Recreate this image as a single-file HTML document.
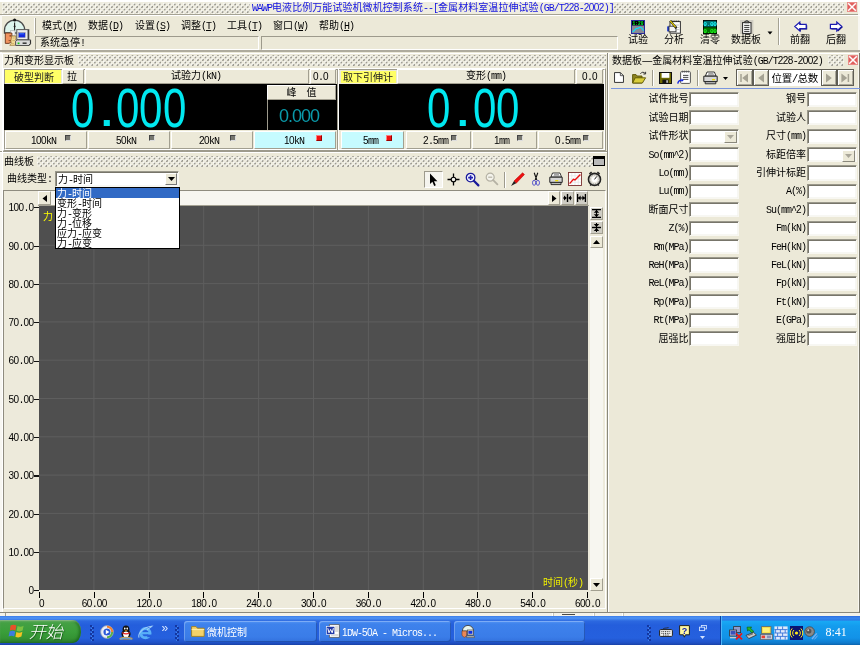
<!DOCTYPE html>
<html lang="zh-CN"><head><meta charset="utf-8"><title>WAWP</title>
<style>
html,body{margin:0;padding:0;}
body{width:860px;height:645px;overflow:hidden;background:#ECE9D8;}
#root{position:relative;width:860px;height:645px;overflow:hidden;background:transparent;
  font-family:"Liberation Sans","Noto Sans CJK SC",sans-serif;font-size:10px;line-height:12px;color:#000;will-change:transform;}
#root div,#root svg{position:absolute;box-sizing:border-box;}
.t{white-space:nowrap;}
.l{font-family:"Liberation Mono","Noto Sans CJK SC",monospace;letter-spacing:-1px;}
.d{font-family:"Liberation Sans",sans-serif;letter-spacing:-0.56px;}
.i{overflow:visible;}
/* dotted gripper pattern used in caption bars */
.dots{background-color:#EEECDF;
  background-image:
   radial-gradient(circle at 0.8px 1.6px,rgba(255,255,255,.95) 0.4px,rgba(255,255,255,0) 1px),
   radial-gradient(circle at 1.6px 2.4px,#74726a 0.5px,rgba(116,114,106,0) 1.05px),
   radial-gradient(circle at 0.8px 1.6px,rgba(255,255,255,.95) 0.4px,rgba(255,255,255,0) 1px),
   radial-gradient(circle at 1.6px 2.4px,#74726a 0.5px,rgba(116,114,106,0) 1.05px);
  background-size:5.04px 5.04px,5.04px 5.04px,5.04px 5.04px,5.04px 5.04px;
  background-position:0 0,0 0,2.52px 2.52px,2.52px 2.52px;}
/* 3D borders */
.raised{border:1px solid;border-color:#fff #a29f90 #a29f90 #fff;background:#ECE9D8;}
.sunken{border:1px solid;border-color:#9d9a8c #fff #fff #9d9a8c;background:#ECE9D8;}
.edit{border:1px solid;border-color:#9a988b #f8f7f1 #f8f7f1 #9a988b;background:#fff;box-shadow:inset 1px 1px 0 #77756a,inset -0.5px -0.5px 0 #f0efe8;}
.hl{background:#C6FBFF;}
.black{background:#000;}
.yel{background:#FFFF66;}

</style></head>
<body>
<div id="root">
<!-- title bar -->
<div class="" style="left:0px;top:0px;width:860px;height:2px;background:#fff;"></div>
<div class="dots" style="left:2px;top:3px;width:842px;height:11px;background-position:0 -1px,0 -1px,2.52px 1.52px,2.52px 1.52px;"></div>
<div class="" style="left:2px;top:2px;width:842px;height:1px;background:#EEECDF;"></div>
<div class="" style="left:0px;top:14px;width:860px;height:1px;background:#a5a293;"></div>
<div class="" style="left:250px;top:2px;width:362px;height:12px;background:#EFEDE0;"></div>
<div class="t" style="left:252px;top:2px;color:#1212E0;letter-spacing:0.065px;"><span class="l">WAWP</span>电液比例万能试验机微机控制系统<span class="l">--[</span>金属材料室温拉伸试验<span class="l">(GB/T</span><span class="d">228</span><span class="l">-</span><span class="d">2002</span><span class="l">)]</span></div>
<div class="" style="left:846.5px;top:2.3px;width:10px;height:10px;background:#E0605E;border:1px solid #E98A86;"></div>
<svg class="i" style="left:846.5px;top:2.3px" width="10" height="10" viewBox="0 0 10 10"><path d="M1.2 1.2 L8.8 8.8 M8.8 1.2 L1.2 8.8" stroke="#fff" stroke-width="1.5" fill="none"/></svg>
<div class="" style="left:858px;top:0px;width:2px;height:52px;background:#F8F7F2;"></div>
<!-- main toolbar -->
<div class="" style="left:0px;top:15px;width:860px;height:1px;background:#fff;"></div>
<div class="" style="left:0px;top:15px;width:2px;height:597px;background:#F8F7F2;"></div>
<div class="" style="left:0px;top:50.3px;width:860px;height:2.2px;background:#aeab9d;"></div>
<div class="" style="left:0px;top:52.5px;width:860px;height:1px;background:#fff;"></div>
<svg class="i" style="left:4px;top:18px" width="28" height="28" viewBox="0 0 28 28">
<path d="M0.5 15 V12.2 A10.1 10.1 0 0 1 20.7 12.2 V15 Z" fill="#DDF5EE" stroke="#4a4a4a" stroke-width="1.3"/>
<circle cx="10.6" cy="2" r="1.5" fill="#111"/>
<path d="M10.6 4.6 V12.6" stroke="#222" stroke-width="1.1"/><path d="M10.6 6.2 L11.5 8.4 L10.6 10.6 L9.7 8.4 Z" fill="#222"/>
<rect x="6.4" y="12.8" width="4.6" height="5" fill="#f4f4f4" stroke="#999" stroke-width="0.5"/>
<path d="M1.3 15 H7.9 V18.4 L8.9 20.4 L7.9 21 V22.6 L6.8 24.2 L5 25.4 H1.3 Z" fill="#F0925E" stroke="#5a2a10" stroke-width="0.8"/>
<path d="M5.6 17.2 h1.2 v1.4 h-1.2 z" fill="#5a2a10"/><path d="M4.6 22.4 Q6 23.2 7.2 22.2" stroke="#5a2a10" stroke-width="0.7" fill="none"/>
<path d="M7.8 18 H11.9 V21 L10.9 22.4 L11.9 23.8 V25.6 L10.6 27.4 H5.8 L7.4 25 L6.8 23 Z" fill="#F2D893" stroke="#8a6a2a" stroke-width="0.6"/>
<path d="M8.6 20 h2 M8.4 22.6 h1.6 M7.6 25.6 h2.4" stroke="#b89a52" stroke-width="0.6"/>
<rect x="12.8" y="11.6" width="12" height="10.3" fill="#ececec" stroke="#555" stroke-width="1"/>
<path d="M24.2 12 V21.6" stroke="#333" stroke-width="1.2"/>
<rect x="14.4" y="14.6" width="6.8" height="5" fill="#1428E0" stroke="#999" stroke-width="0.5"/>
<path d="M15.4 15.8 h4.6" stroke="#4a8aff" stroke-width="0.8"/>
<path d="M11.6 23.4 L13 21.9 H26.6 V25.6 L25.2 27.5 H11.6 Z" fill="#dadada" stroke="#444" stroke-width="0.9"/>
<path d="M25.2 27.2 L26.4 25.6 V22.4" stroke="#222" stroke-width="0.9" fill="none"/>
<rect x="13.6" y="24.5" width="1.9" height="1.7" fill="#14c814"/>
<path d="M18.6 25.2 h4" stroke="#333" stroke-width="1.5"/>
</svg>
<div class="" style="left:34px;top:18px;width:1px;height:16px;background:#fff;"></div>
<div class="" style="left:35px;top:18px;width:1px;height:16px;background:#a5a293;"></div>
<div class="t" style="left:42px;top:20px;">模式<span class="l">(<u>M</u>)</span></div>
<div class="t" style="left:88px;top:20px;">数据<span class="l">(<u>D</u>)</span></div>
<div class="t" style="left:135px;top:20px;">设置<span class="l">(<u>S</u>)</span></div>
<div class="t" style="left:181px;top:20px;">调整<span class="l">(<u>T</u>)</span></div>
<div class="t" style="left:227px;top:20px;">工具<span class="l">(<u>T</u>)</span></div>
<div class="t" style="left:273px;top:20px;">窗口<span class="l">(<u>W</u>)</span></div>
<div class="t" style="left:319px;top:20px;">帮助<span class="l">(<u>H</u>)</span></div>
<div class="sunken" style="left:35px;top:36px;width:224px;height:14px;"></div>
<div class="t" style="left:40px;top:37px;">系统急停<span class="l">!</span></div>
<div class="sunken" style="left:261px;top:36px;width:357px;height:14px;"></div>
<svg class="i" style="left:631px;top:20px" width="14" height="14" viewBox="0 0 14 14">
<rect x="0" y="0" width="14" height="14" fill="#2a2a9a"/>
<rect x="1" y="1" width="12" height="4.6" fill="#000"/>
<rect x="1" y="5.6" width="12" height="7.4" fill="#8a8a94"/>
<text x="7" y="5" font-family="Liberation Mono, monospace" font-size="4.6" font-weight="bold" fill="#00ff30" text-anchor="middle">1:20</text>
<path d="M1.5 12 C4 11 4.5 8 6 8.4 S8.5 6.6 10 7.4 S12 10 12.6 10.6" stroke="#00e5ff" stroke-width="1.1" fill="none"/>
</svg>
<div class="t" style="left:628px;top:34px;">试验</div>
<svg class="i" style="left:667px;top:20px" width="14" height="14" viewBox="0 0 14 14">
<rect x="3" y="1.6" width="10.4" height="11.6" fill="#fff" stroke="#333" stroke-width="1"/>
<path d="M3.6 1.2 H13" stroke="#222" stroke-width="1.6" stroke-dasharray="1 0.9"/>
<path d="M5 5 h7 M9.6 7.4 h2.6 M9.6 9.6 h2.6" stroke="#aaa" stroke-width="0.7"/>
<rect x="0.2" y="6.4" width="1.8" height="5" fill="#1030d0"/>
<rect x="2" y="6.2" width="7" height="5.6" fill="#f4f4f4" stroke="#333" stroke-width="0.9"/>
<path d="M3.2 0.8 L9.4 8.2" stroke="#222" stroke-width="2.2"/>
<path d="M3.2 0.8 L8.6 7.2" stroke="#e8d000" stroke-width="1.2"/>
</svg>
<div class="t" style="left:664px;top:34px;">分析</div>
<svg class="i" style="left:703px;top:20px" width="14" height="14" viewBox="0 0 14 14">
<rect x="0" y="0" width="14" height="14" fill="#000"/>
<rect x="0.8" y="0.8" width="12.4" height="5.9" fill="#007070"/>
<rect x="0.8" y="7.3" width="12.4" height="5.9" fill="#007000"/>
<text x="7" y="6" font-family="Liberation Mono, monospace" font-size="6.2" font-weight="bold" fill="#20ffff" text-anchor="middle" letter-spacing="-0.4">0.00</text>
<text x="7" y="12.6" font-family="Liberation Mono, monospace" font-size="6.2" font-weight="bold" fill="#20ff20" text-anchor="middle" letter-spacing="-0.4">0.00</text>
</svg>
<div class="t" style="left:700px;top:34px;">清零</div>
<svg class="i" style="left:740px;top:20px" width="14" height="14" viewBox="0 0 14 14">
<rect x="0" y="0" width="13.4" height="14" fill="#cfccc2"/>
<rect x="2.6" y="2.6" width="8.4" height="10.8" fill="#fff" stroke="#222" stroke-width="1"/>
<path d="M4.6 2.8 V1.6 H5.8 V0.8 H7.8 V1.6 H9 V2.8 Z" fill="#999" stroke="#222" stroke-width="0.8"/>
<path d="M4.2 5.4 h5.2 M4.2 7.4 h5.2 M4.2 9.4 h5.2 M4.2 11.4 h5.2" stroke="#333" stroke-width="1"/>
</svg>
<div class="t" style="left:731px;top:34px;">数据板</div>
<svg class="i" style="left:767px;top:31px" width="6" height="4" viewBox="0 0 6 4"><path d="M0.5 0.5 h5 l-2.5 3 z" fill="#000"/></svg>
<div class="" style="left:778px;top:18px;width:1px;height:27px;background:#a5a293;"></div>
<div class="" style="left:779px;top:18px;width:1px;height:27px;background:#fff;"></div>
<svg class="i" style="left:794px;top:20.5px" width="14" height="12" viewBox="0 0 14 12"><path d="M1.8 6.3 L6.8 1.8 V4.2 H13.2 V8.4 H6.8 V10.8 Z" fill="#10107a"/><path d="M0.8 5.5 L5.8 1 V3.4 H12.2 V7.6 H5.8 V10 Z" fill="#fff" stroke="#1c1cb0" stroke-width="1.2" stroke-linejoin="miter"/></svg>
<div class="t" style="left:790px;top:34px;">前翻</div>
<svg class="i" style="left:829px;top:20.5px" width="14" height="12" viewBox="0 0 14 12"><path d="M13.8 6.3 L8.8 1.8 V4.2 H2.4 V8.4 H8.8 V10.8 Z" fill="#10107a"/><path d="M12.8 5.5 L7.8 1 V3.4 H1.4 V7.6 H7.8 V10 Z" fill="#fff" stroke="#1c1cb0" stroke-width="1.2" stroke-linejoin="miter"/></svg>
<div class="t" style="left:826px;top:34px;">后翻</div>
<!-- force and deformation panel -->
<div class="dots" style="left:78px;top:55px;width:528px;height:11px;"></div>
<div class="t" style="left:4px;top:55px;">力和变形显示板</div>
<div class="sunken" style="left:3px;top:68px;width:603px;height:83px;border-color:#fff #9d9a8c #9d9a8c #fff;"></div>
<div class="sunken" style="left:4px;top:69px;width:601px;height:81px;border-color:#9d9a8c #fff #fff #9d9a8c;"></div>
<div class="" style="left:337px;top:69px;width:1px;height:81px;background:#9d9a8c;"></div>
<div class="" style="left:338px;top:69px;width:1px;height:81px;background:#fff;"></div>
<div class="yel" style="left:5px;top:70px;width:56px;height:13px;"></div>
<div class="t" style="left:14px;top:72px;color:#222;">破型判断</div>
<div class="raised" style="left:62px;top:69px;width:22px;height:15px;"></div>
<div class="t" style="left:67px;top:71px;">拉</div>
<div class="raised" style="left:85px;top:69px;width:224px;height:15px;"></div>
<div class="t" style="left:171px;top:70px;">试验力<span class="l">(kN)</span></div>
<div class="raised" style="left:310px;top:69px;width:26px;height:15px;"></div>
<div class="t" style="left:313px;top:71px;"><span class="d">0</span><span class="l">.</span><span class="d">0</span></div>
<div class="yel" style="left:341px;top:71px;width:55px;height:12px;"></div>
<div class="t" style="left:343px;top:72px;color:#222;">取下引伸计</div>
<div class="raised" style="left:397px;top:69px;width:178px;height:15px;"></div>
<div class="t" style="left:466px;top:70px;">变形<span class="l">(mm)</span></div>
<div class="raised" style="left:576px;top:69px;width:27px;height:15px;"></div>
<div class="t" style="left:582px;top:71px;"><span class="d">0</span><span class="l">.</span><span class="d">0</span></div>
<div class="black" style="left:4px;top:84px;width:333px;height:46px;"></div>
<div class="black" style="left:339px;top:84px;width:265px;height:46px;"></div>
<div class="t seg" style="left:71px;top:89px;width:20px;height:39px;color:#00E8F0;font-size:55px;line-height:39px;"><span style="display:inline-block;transform:scaleX(0.765);transform-origin:0 50%;">0</span></div>
<div class="t seg" style="left:115.5px;top:89px;width:20px;height:39px;color:#00E8F0;font-size:55px;line-height:39px;"><span style="display:inline-block;transform:scaleX(0.765);transform-origin:0 50%;">0</span></div>
<div class="t seg" style="left:139px;top:89px;width:20px;height:39px;color:#00E8F0;font-size:55px;line-height:39px;"><span style="display:inline-block;transform:scaleX(0.765);transform-origin:0 50%;">0</span></div>
<div class="t seg" style="left:162.5px;top:89px;width:20px;height:39px;color:#00E8F0;font-size:55px;line-height:39px;"><span style="display:inline-block;transform:scaleX(0.765);transform-origin:0 50%;">0</span></div>
<div class="t seg" style="left:97.5px;top:87.5px;width:20px;height:39px;color:#00E8F0;font-size:55px;line-height:39px;"><span style="display:inline-block;transform:scaleX(1.15);transform-origin:0 50%;">.</span></div>
<div class="t seg" style="left:427px;top:89px;width:20px;height:39px;color:#00E8F0;font-size:55px;line-height:39px;"><span style="display:inline-block;transform:scaleX(0.765);transform-origin:0 50%;">0</span></div>
<div class="t seg" style="left:472.5px;top:89px;width:20px;height:39px;color:#00E8F0;font-size:55px;line-height:39px;"><span style="display:inline-block;transform:scaleX(0.765);transform-origin:0 50%;">0</span></div>
<div class="t seg" style="left:495.5px;top:89px;width:20px;height:39px;color:#00E8F0;font-size:55px;line-height:39px;"><span style="display:inline-block;transform:scaleX(0.765);transform-origin:0 50%;">0</span></div>
<div class="t seg" style="left:453.5px;top:87.5px;width:20px;height:39px;color:#00E8F0;font-size:55px;line-height:39px;"><span style="display:inline-block;transform:scaleX(1.15);transform-origin:0 50%;">.</span></div>
<div class="raised" style="left:267px;top:85px;width:69px;height:15px;"></div>
<div class="t" style="left:268px;top:87px;width:67px;text-align:center;word-spacing:7px;">峰 值</div>
<div class="" style="left:267px;top:100px;width:1px;height:30px;background:#9d9a8c;"></div>
<div class="t" style="left:279px;top:105.5px;color:#0A9AAA;font-size:18px;line-height:20px;font-family:'Liberation Sans',sans-serif;letter-spacing:-1px;line-height:20px;">0.000</div>
<div class="raised" style="left:5px;top:131px;width:82px;height:18px;"></div>
<div class="t" style="left:31px;top:135px;"><span class="d">100</span><span class="l">kN</span></div>
<div class="" style="left:65px;top:135px;width:6px;height:6px;background:#77776f;border:1px solid;border-color:#444 #ddd #ddd #444;"></div>
<div class="raised" style="left:88px;top:131px;width:82px;height:18px;"></div>
<div class="t" style="left:116px;top:135px;"><span class="d">50</span><span class="l">kN</span></div>
<div class="" style="left:149px;top:135px;width:6px;height:6px;background:#77776f;border:1px solid;border-color:#444 #ddd #ddd #444;"></div>
<div class="raised" style="left:171px;top:131px;width:82px;height:18px;"></div>
<div class="t" style="left:199px;top:135px;"><span class="d">20</span><span class="l">kN</span></div>
<div class="" style="left:230px;top:135px;width:6px;height:6px;background:#77776f;border:1px solid;border-color:#444 #ddd #ddd #444;"></div>
<div class="raised hl" style="left:254px;top:131px;width:82px;height:18px;"></div>
<div class="t" style="left:284px;top:135px;"><span class="d">10</span><span class="l">kN</span></div>
<div class="" style="left:316px;top:135px;width:6px;height:6px;background:#F01010;border:1px solid;border-color:#ff8080 #900 #900 #ff8080;"></div>
<div class="raised hl" style="left:341px;top:131px;width:63px;height:18px;"></div>
<div class="t" style="left:363px;top:135px;"><span class="d">5</span><span class="l">mm</span></div>
<div class="" style="left:386px;top:135px;width:6px;height:6px;background:#F01010;border:1px solid;border-color:#ff8080 #900 #900 #ff8080;"></div>
<div class="raised" style="left:406px;top:131px;width:65px;height:18px;"></div>
<div class="t" style="left:423px;top:135px;"><span class="d">2</span><span class="l">.</span><span class="d">5</span><span class="l">mm</span></div>
<div class="" style="left:451px;top:135px;width:6px;height:6px;background:#77776f;border:1px solid;border-color:#444 #ddd #ddd #444;"></div>
<div class="raised" style="left:472px;top:131px;width:65px;height:18px;"></div>
<div class="t" style="left:494px;top:135px;"><span class="d">1</span><span class="l">mm</span></div>
<div class="" style="left:517px;top:135px;width:6px;height:6px;background:#77776f;border:1px solid;border-color:#444 #ddd #ddd #444;"></div>
<div class="raised" style="left:538px;top:131px;width:65px;height:18px;"></div>
<div class="t" style="left:555px;top:135px;"><span class="d">0</span><span class="l">.</span><span class="d">5</span><span class="l">mm</span></div>
<div class="" style="left:583px;top:135px;width:6px;height:6px;background:#77776f;border:1px solid;border-color:#444 #ddd #ddd #444;"></div>
<!-- curve panel -->
<div class="" style="left:0px;top:151px;width:608px;height:1px;background:#9d9a8c;"></div>
<div class="" style="left:0px;top:152px;width:608px;height:1px;background:#fff;"></div>
<div class="dots" style="left:37px;top:156px;width:556px;height:11px;"></div>
<div class="t" style="left:4px;top:156px;">曲线板</div>
<div class="" style="left:593px;top:156px;width:12px;height:10px;background:#b9b9b9;border:1px solid #000;border-top:3px solid #000;"></div>
<div class="t" style="left:7px;top:173px;">曲线类型<span class="l">:</span></div>
<div class="edit" style="left:55px;top:171px;width:124px;height:16px;"></div>
<div class="t" style="left:58px;top:174px;">力<span class="l">-</span>时间</div>
<div class="raised" style="left:165px;top:173px;width:12px;height:12px;border-color:#fff #777 #777 #fff;"></div>
<svg class="i" style="left:168px;top:177px" width="7" height="4" viewBox="0 0 7 4"><path d="M0 0 h7 l-3.5 4 z" fill="#000"/></svg>
<div class="" style="left:424px;top:171px;width:19px;height:17px;background:#f5f4ee;border:1px solid;border-color:#9d9a8c #fff #fff #9d9a8c;"></div>
<svg class="i" style="left:429px;top:173px" width="9" height="14" viewBox="0 0 9 14"><path d="M1 0.5 V11 L3.4 8.8 L5.2 13 L6.8 12.3 L5 8.2 H8.4 Z" fill="#000"/></svg>
<svg class="i" style="left:447px;top:173px" width="13" height="13" viewBox="0 0 13 13"><path d="M6.5 0.5 V12.5 M0.5 6.5 H12.5" stroke="#000" stroke-width="1.3"/><circle cx="6.5" cy="6.5" r="2.3" fill="#f4f3ec" stroke="#000" stroke-width="1.1"/></svg>
<svg class="i" style="left:465px;top:172px" width="15" height="15" viewBox="0 0 15 15"><circle cx="5.6" cy="5.6" r="4.3" fill="#f2f4ff" stroke="#1a1a9a" stroke-width="1.3"/>
<path d="M3.2 5.6 H8 M5.6 3.2 V8" stroke="#2020b0" stroke-width="1.6"/>
<path d="M8.8 8.8 L13.4 13.4" stroke="#1a1a9a" stroke-width="2.2" stroke-linecap="round"/></svg>
<svg class="i" style="left:485px;top:172px" width="14" height="14" viewBox="0 0 14 14"><circle cx="5.2" cy="5.2" r="4" fill="#f4f3ec" stroke="#b5b2a4" stroke-width="1.2"/>
<path d="M3.2 5.2 H7.2" stroke="#b5b2a4" stroke-width="1.2"/>
<path d="M8.2 8.2 L12.4 12.4" stroke="#b5b2a4" stroke-width="1.8" stroke-linecap="round"/></svg>
<div class="" style="left:504px;top:172px;width:1px;height:16px;background:#9d9a8c;"></div>
<div class="" style="left:505px;top:172px;width:1px;height:16px;background:#fff;"></div>
<svg class="i" style="left:510px;top:172px" width="15" height="15" viewBox="0 0 15 15"><path d="M12.6 0.8 L14.4 2.6 L6.2 11.2 L4 9 Z" fill="#EE1010" stroke="#b00" stroke-width="0.6"/>
<path d="M4 9 L6.2 11.2 L1 14 Z" fill="#222"/></svg>
<svg class="i" style="left:531px;top:172px" width="10" height="15" viewBox="0 0 10 15"><path d="M3.2 0.8 L5.8 8 M6.8 0.8 L4.2 8" stroke="#111" stroke-width="1.1"/>
<ellipse cx="3.1" cy="10.8" rx="1.6" ry="2.5" fill="none" stroke="#4848c8" stroke-width="0.9"/>
<ellipse cx="6.9" cy="10.8" rx="1.6" ry="2.5" fill="none" stroke="#4848c8" stroke-width="0.9"/></svg>
<svg class="i" style="left:549px;top:172px" width="14" height="14" viewBox="0 0 14 14"><path d="M3.5 1 H11 L12.5 5 H2 Z" fill="#fff" stroke="#222" stroke-width="0.9"/>
<path d="M0.8 5.2 H13.2 V10.4 H0.8 Z" fill="#d6d6d6" stroke="#222" stroke-width="1"/>
<path d="M2 10.4 H12 V12.6 H2 Z" fill="#bbb" stroke="#222" stroke-width="0.9"/>
<rect x="6.2" y="8" width="3" height="1.3" fill="#e8d800"/>
<path d="M5 2.6 h5 M4.6 3.8 h6" stroke="#555" stroke-width="0.6"/></svg>
<svg class="i" style="left:568px;top:172px" width="14" height="14" viewBox="0 0 14 14"><rect x="0.5" y="0.5" width="13" height="13" fill="#fff" stroke="#7a3030" stroke-width="0.9"/>
<path d="M3.8 1 V13 M7 1 V13 M10.2 1 V13 M1 3.8 H13 M1 7 H13 M1 10.2 H13" stroke="#ddd" stroke-width="0.6"/>
<path d="M1.6 11.6 L5.4 7.4 L7 8 L12.4 2.4" stroke="#EE1010" stroke-width="1.4" fill="none"/></svg>
<svg class="i" style="left:587px;top:171px" width="15" height="16" viewBox="0 0 15 16"><path d="M2.4 3 L4.6 1 M12.6 3 L10.4 1" stroke="#222" stroke-width="1.6"/>
<circle cx="7.5" cy="8.4" r="6" fill="#eceae2" stroke="#222" stroke-width="1.6"/>
<circle cx="7.5" cy="8.4" r="4.4" fill="none" stroke="#777" stroke-width="0.9" stroke-dasharray="0.7 1.1"/>
<circle cx="7.5" cy="8.4" r="2.6" fill="#fff"/>
<path d="M7.5 8.4 L9.8 5.4" stroke="#222" stroke-width="1"/>
<path d="M3.2 14.6 L4.4 13.2 M11.8 14.6 L10.6 13.2" stroke="#222" stroke-width="1.3"/></svg>
<div class="" style="left:2px;top:53px;width:1px;height:559px;background:#fff;"></div>
<div class="" style="left:3px;top:190px;width:603px;height:419px;border:1px solid;border-color:#8f8c7f #fff #fff #8f8c7f;background:#EDEADB;"></div>
<div class="" style="left:38px;top:191px;width:510px;height:15px;background:#f7f6f0;"></div>
<div class="raised" style="left:38px;top:191px;width:13px;height:14px;"></div>
<svg class="i" style="left:42px;top:195px" width="5" height="7" viewBox="0 0 5 7"><path d="M5 0 V7 L0.5 3.5 Z" fill="#000"/></svg>
<div class="raised" style="left:548px;top:191px;width:12px;height:14px;"></div>
<svg class="i" style="left:552px;top:195px" width="5" height="7" viewBox="0 0 5 7"><path d="M0 0 V7 L4.5 3.5 Z" fill="#000"/></svg>
<div class="raised" style="left:561px;top:191px;width:13px;height:14px;background:#cfcdc4;"></div>
<svg class="i" style="left:563px;top:194px" width="9" height="8" viewBox="0 0 9 8"><path d="M4.5 0 V8" stroke="#000" stroke-width="1.4"/><path d="M0 4 H3 M9 4 H6" stroke="#000" stroke-width="1"/><path d="M1 1.4 L3.9 4 L1 6.6 Z M8 1.4 L5.1 4 L8 6.6 Z" fill="#000"/></svg>
<div class="raised" style="left:575px;top:191px;width:13px;height:14px;background:#cfcdc4;"></div>
<svg class="i" style="left:577px;top:194px" width="9" height="8" viewBox="0 0 9 8"><path d="M0.6 0 V8 M8.4 0 V8" stroke="#000" stroke-width="1.3"/><path d="M1 4 H8" stroke="#000" stroke-width="1.1"/><path d="M3.6 1.6 L1 4 L3.6 6.4 Z M5.4 1.6 L8 4 L5.4 6.4 Z" fill="#000"/></svg>
<svg class="i" style="left:39px;top:206px" width="549" height="384" viewBox="0 0 549 384"><rect x="0" y="0" width="549" height="384" fill="#4F4F4F"/><g stroke="#5E5E5E" stroke-width="1" fill="none"><path d="M54.9 0 V384" /><path d="M109.8 0 V384" /><path d="M164.7 0 V384" /><path d="M219.6 0 V384" /><path d="M274.5 0 V384" /><path d="M329.4 0 V384" /><path d="M384.3 0 V384" /><path d="M439.2 0 V384" /><path d="M494.1 0 V384" /><path d="M0 39.3 H549" /><path d="M0 77.6 H549" /><path d="M0 115.9 H549" /><path d="M0 154.2 H549" /><path d="M0 192.5 H549" /><path d="M0 230.8 H549" /><path d="M0 269.1 H549" /><path d="M0 307.4 H549" /><path d="M0 345.7 H549" /></g></svg>
<div class="" style="left:38px;top:205px;width:551px;height:1px;background:#a5a293;"></div>
<div class="t" style="left:43px;top:211px;color:#FFFF00;">力</div>
<div class="t" style="left:543px;top:577px;color:#F0F000;">时间<span class="l">(</span>秒<span class="l">)</span></div>
<div class="t" style="left:0px;top:202.2px;width:33.5px;text-align:right;"><span class="d">100</span><span class="l">.</span><span class="d">0</span></div>
<div class="" style="left:33.5px;top:207.3px;width:5.5px;height:1.2px;background:#111;"></div>
<div class="t" style="left:0px;top:240.5px;width:33.5px;text-align:right;"><span class="d">90</span><span class="l">.</span><span class="d">00</span></div>
<div class="" style="left:33.5px;top:245.6px;width:5.5px;height:1.2px;background:#111;"></div>
<div class="t" style="left:0px;top:278.8px;width:33.5px;text-align:right;"><span class="d">80</span><span class="l">.</span><span class="d">00</span></div>
<div class="" style="left:33.5px;top:283.9px;width:5.5px;height:1.2px;background:#111;"></div>
<div class="t" style="left:0px;top:317.1px;width:33.5px;text-align:right;"><span class="d">70</span><span class="l">.</span><span class="d">00</span></div>
<div class="" style="left:33.5px;top:322.2px;width:5.5px;height:1.2px;background:#111;"></div>
<div class="t" style="left:0px;top:355.4px;width:33.5px;text-align:right;"><span class="d">60</span><span class="l">.</span><span class="d">00</span></div>
<div class="" style="left:33.5px;top:360.5px;width:5.5px;height:1.2px;background:#111;"></div>
<div class="t" style="left:0px;top:393.7px;width:33.5px;text-align:right;"><span class="d">50</span><span class="l">.</span><span class="d">00</span></div>
<div class="" style="left:33.5px;top:398.8px;width:5.5px;height:1.2px;background:#111;"></div>
<div class="t" style="left:0px;top:432.0px;width:33.5px;text-align:right;"><span class="d">40</span><span class="l">.</span><span class="d">00</span></div>
<div class="" style="left:33.5px;top:437.1px;width:5.5px;height:1.2px;background:#111;"></div>
<div class="t" style="left:0px;top:470.3px;width:33.5px;text-align:right;"><span class="d">30</span><span class="l">.</span><span class="d">00</span></div>
<div class="" style="left:33.5px;top:475.4px;width:5.5px;height:1.2px;background:#111;"></div>
<div class="t" style="left:0px;top:508.6px;width:33.5px;text-align:right;"><span class="d">20</span><span class="l">.</span><span class="d">00</span></div>
<div class="" style="left:33.5px;top:513.7px;width:5.5px;height:1.2px;background:#111;"></div>
<div class="t" style="left:0px;top:546.9px;width:33.5px;text-align:right;"><span class="d">10</span><span class="l">.</span><span class="d">00</span></div>
<div class="" style="left:33.5px;top:552.0px;width:5.5px;height:1.2px;background:#111;"></div>
<div class="t" style="left:0px;top:585.2px;width:33.5px;text-align:right;"><span class="d">0</span></div>
<div class="" style="left:33.5px;top:590.3px;width:5.5px;height:1.2px;background:#111;"></div>
<div class="" style="left:39.0px;top:592px;width:1px;height:6px;background:#000;"></div>
<div class="t" style="left:39px;top:598px;"><span class="d">0</span></div>
<div class="" style="left:93.8px;top:592px;width:1px;height:6px;background:#000;"></div>
<div class="t" style="left:74.3px;top:598px;width:40px;text-align:center;"><span class="d">60</span><span class="l">.</span><span class="d">00</span></div>
<div class="" style="left:148.6px;top:592px;width:1px;height:6px;background:#000;"></div>
<div class="t" style="left:129.1px;top:598px;width:40px;text-align:center;"><span class="d">120</span><span class="l">.</span><span class="d">0</span></div>
<div class="" style="left:203.4px;top:592px;width:1px;height:6px;background:#000;"></div>
<div class="t" style="left:183.9px;top:598px;width:40px;text-align:center;"><span class="d">180</span><span class="l">.</span><span class="d">0</span></div>
<div class="" style="left:258.2px;top:592px;width:1px;height:6px;background:#000;"></div>
<div class="t" style="left:238.7px;top:598px;width:40px;text-align:center;"><span class="d">240</span><span class="l">.</span><span class="d">0</span></div>
<div class="" style="left:313.0px;top:592px;width:1px;height:6px;background:#000;"></div>
<div class="t" style="left:293.5px;top:598px;width:40px;text-align:center;"><span class="d">300</span><span class="l">.</span><span class="d">0</span></div>
<div class="" style="left:367.8px;top:592px;width:1px;height:6px;background:#000;"></div>
<div class="t" style="left:348.3px;top:598px;width:40px;text-align:center;"><span class="d">360</span><span class="l">.</span><span class="d">0</span></div>
<div class="" style="left:422.6px;top:592px;width:1px;height:6px;background:#000;"></div>
<div class="t" style="left:403.1px;top:598px;width:40px;text-align:center;"><span class="d">420</span><span class="l">.</span><span class="d">0</span></div>
<div class="" style="left:477.4px;top:592px;width:1px;height:6px;background:#000;"></div>
<div class="t" style="left:457.9px;top:598px;width:40px;text-align:center;"><span class="d">480</span><span class="l">.</span><span class="d">0</span></div>
<div class="" style="left:532.2px;top:592px;width:1px;height:6px;background:#000;"></div>
<div class="t" style="left:512.7px;top:598px;width:40px;text-align:center;"><span class="d">540</span><span class="l">.</span><span class="d">0</span></div>
<div class="" style="left:587.0px;top:592px;width:1px;height:6px;background:#000;"></div>
<div class="t" style="left:567.5px;top:598px;width:40px;text-align:center;"><span class="d">600</span><span class="l">.</span><span class="d">0</span></div>
<div class="raised" style="left:590px;top:207px;width:13px;height:13px;background:#cfcdc4;"></div>
<svg class="i" style="left:592px;top:209px" width="9" height="9" viewBox="0 0 9 9"><path d="M0 0.6 H9 M0 8.4 H9" stroke="#000" stroke-width="1.3"/><path d="M4.5 1 V8" stroke="#000" stroke-width="1.1"/><path d="M1.8 3.8 L4.5 1 L7.2 3.8 Z M1.8 5.2 L4.5 8 L7.2 5.2 Z" fill="#000"/></svg>
<div class="raised" style="left:590px;top:221px;width:13px;height:13px;background:#cfcdc4;"></div>
<svg class="i" style="left:592px;top:223px" width="9" height="9" viewBox="0 0 9 9"><path d="M0 4.5 H9" stroke="#000" stroke-width="1.4"/><path d="M4.5 0 V9" stroke="#000" stroke-width="1"/><path d="M1.8 1 L4.5 3.9 L7.2 1 Z M1.8 8 L4.5 5.1 L7.2 8 Z" fill="#000"/></svg>
<div class="raised" style="left:590px;top:236px;width:13px;height:12px;"></div>
<svg class="i" style="left:593px;top:240px" width="7" height="4" viewBox="0 0 7 4"><path d="M0 4 H7 L3.5 0 Z" fill="#000"/></svg>
<div class="" style="left:590px;top:248px;width:13px;height:330px;background:#f7f6f0;"></div>
<div class="raised" style="left:590px;top:578px;width:13px;height:13px;"></div>
<svg class="i" style="left:593px;top:583px" width="7" height="4" viewBox="0 0 7 4"><path d="M0 0 H7 L3.5 4 Z" fill="#000"/></svg>
<div class="" style="left:55px;top:187px;width:125px;height:62px;background:#fff;border:1px solid #000;"></div>
<div class="" style="left:56px;top:188px;width:123px;height:10px;background:#316AC5;"></div>
<div class="t" style="left:57px;top:188.0px;color:#fff;">力<span class="l">-</span>时间</div>
<div class="t" style="left:57px;top:198.0px;color:#000;">变形<span class="l">-</span>时间</div>
<div class="t" style="left:57px;top:208.0px;color:#000;">力<span class="l">-</span>变形</div>
<div class="t" style="left:57px;top:218.0px;color:#000;">力<span class="l">-</span>位移</div>
<div class="t" style="left:57px;top:228.0px;color:#000;">应力<span class="l">-</span>应变</div>
<div class="t" style="left:57px;top:238.0px;color:#000;">力<span class="l">-</span>应变</div>
<div class="" style="left:0px;top:611.5px;width:860px;height:1.5px;background:#8a887c;"></div>
<div class="" style="left:0px;top:613px;width:860px;height:3.5px;background:#F4F2E8;"></div>
<div class="" style="left:5px;top:613px;width:1px;height:3px;background:#9d9a8c;"></div>
<div class="" style="left:552px;top:613px;width:1px;height:3px;background:#fff;"></div>
<div class="" style="left:553px;top:613px;width:1px;height:3px;background:#c9c6b8;"></div>
<div class="" style="left:593px;top:613px;width:1px;height:3px;background:#fff;"></div>
<div class="" style="left:594px;top:613px;width:1px;height:3px;background:#c9c6b8;"></div>
<div class="" style="left:622px;top:613px;width:1px;height:3px;background:#fff;"></div>
<div class="" style="left:623px;top:613px;width:1px;height:3px;background:#c9c6b8;"></div>
<div class="" style="left:562px;top:613.5px;width:13px;height:1.5px;background:#4a4a46;"></div>
<!-- data panel -->
<div class="" style="left:606.5px;top:53px;width:1.5px;height:559px;background:#8a887c;"></div>
<div class="" style="left:608px;top:53px;width:1px;height:559px;background:#fff;"></div>
<div class="dots" style="left:828px;top:55px;width:16px;height:11px;"></div>
<div class="t" style="left:612px;top:55px;letter-spacing:0.05px;">数据板—金属材料室温拉伸试验<span class="l">(GB/T</span><span class="d">228</span><span class="l">-</span><span class="d">2002</span><span class="l">)</span></div>
<div class="" style="left:848px;top:55px;width:10px;height:10px;background:#E0605E;border:1px solid #E98A86;"></div>
<svg class="i" style="left:848px;top:55px" width="10" height="10" viewBox="0 0 10 10"><path d="M1.2 1.2 L8.8 8.8 M8.8 1.2 L1.2 8.8" stroke="#fff" stroke-width="1.5" fill="none"/></svg>
<div class="" style="left:857.8px;top:53px;width:0.8px;height:558px;background:#f8f7f0;"></div>
<div class="" style="left:858.6px;top:53px;width:1.4px;height:560px;background:#77756a;"></div>
<svg class="i" style="left:614px;top:71.5px" width="10" height="11" viewBox="0 0 11 12"><path d="M0.6 0.6 H7 L10.4 4 V11.4 H0.6 Z" fill="#fff" stroke="#222" stroke-width="1"/><path d="M7 0.6 V4 H10.4" fill="none" stroke="#222" stroke-width="0.8"/></svg>
<svg class="i" style="left:632px;top:71px" width="15" height="13" viewBox="0 0 15 13"><path d="M0.6 12 V3.6 H4 L5.2 5 H10 V12 Z" fill="#8f8420" stroke="#5a5200" stroke-width="0.9"/>
<path d="M0.6 12 L3.2 6.8 H13.6 L10.4 12 Z" fill="#d9cd3c" stroke="#5a5200" stroke-width="0.9"/>
<path d="M8.4 2.8 C9.6 0.8 12 0.8 13 2.4" fill="none" stroke="#222" stroke-width="0.9"/><path d="M13.6 0.8 V3 H11.4" fill="none" stroke="#222" stroke-width="0.9"/></svg>
<div class="" style="left:652px;top:70px;width:1px;height:16px;background:#9d9a8c;"></div>
<div class="" style="left:653px;top:70px;width:1px;height:16px;background:#fff;"></div>
<svg class="i" style="left:659px;top:72px" width="13" height="12" viewBox="0 0 13 12"><rect x="0.5" y="0.5" width="12" height="11" fill="#6e6a00" stroke="#111" stroke-width="1"/>
<rect x="2.6" y="1" width="7.8" height="4.8" fill="#fff"/>
<rect x="3.4" y="7.6" width="6.2" height="3.6" fill="#111"/><rect x="7.4" y="8.2" width="1.4" height="2.6" fill="#ddd"/></svg>
<svg class="i" style="left:677px;top:70px" width="15" height="15" viewBox="0 0 15 15"><rect x="3.6" y="1.6" width="9.8" height="11.8" rx="1" fill="#fff" stroke="#555" stroke-width="1"/>
<path d="M5.4 0.6 v2 M7.4 0.6 v2 M9.4 0.6 v2 M11.4 0.6 v2" stroke="#555" stroke-width="0.8"/>
<path d="M6 5.4 h5.4 M6 7.4 h5.4 M6 9.4 h5.4" stroke="#333" stroke-width="0.9"/>
<path d="M0.8 13.6 C1.2 11 3 10 5.4 10.2" fill="none" stroke="#1020e0" stroke-width="1.4"/><path d="M4.6 8.6 L6.6 10.3 L4.6 12 Z" fill="#1020e0"/></svg>
<div class="" style="left:697px;top:70px;width:1px;height:16px;background:#9d9a8c;"></div>
<div class="" style="left:698px;top:70px;width:1px;height:16px;background:#fff;"></div>
<svg class="i" style="left:703px;top:71px" width="15" height="14" viewBox="0 0 15 14"><path d="M4 1 H11.4 L13 5 H2.4 Z" fill="#fff" stroke="#222" stroke-width="0.9"/>
<path d="M0.8 5.2 H14.2 V10.6 H0.8 Z" fill="#d6d6d6" stroke="#222" stroke-width="1"/>
<path d="M2.2 10.6 H12.8 V12.8 H2.2 Z" fill="#bbb" stroke="#222" stroke-width="0.9"/>
<rect x="9" y="8" width="3" height="1.3" fill="#e8d800"/>
<path d="M5.4 2.6 h5 M5 3.8 h6" stroke="#555" stroke-width="0.6"/></svg>
<svg class="i" style="left:723px;top:77px" width="5" height="3" viewBox="0 0 5 3"><path d="M0 0 H5 L2.5 3 Z" fill="#000"/></svg>
<div class="" style="left:736px;top:69px;width:17px;height:17px;background:#ECE9D8;border:1px solid #5f5d54;box-shadow:inset 1px 1px 0 #fff,inset -1px -1px 0 #aaa79a;"></div>
<svg class="i" style="left:739px;top:72.5px" width="10" height="10" viewBox="0 0 10 10"><path d="M2 1 V9" stroke="#a5a293" stroke-width="1.5"/><path d="M9 0.6 V9.4 L3.2 5 Z" fill="#a5a293"/></svg>
<div class="" style="left:753px;top:69px;width:16px;height:17px;background:#ECE9D8;border:1px solid #5f5d54;box-shadow:inset 1px 1px 0 #fff,inset -1px -1px 0 #aaa79a;"></div>
<svg class="i" style="left:756px;top:72.5px" width="10" height="10" viewBox="0 0 10 10"><path d="M8 0.6 V9.4 L2.2 5 Z" fill="#a5a293"/></svg>
<div class="" style="left:769px;top:69px;width:52px;height:17px;background:#fff;border-top:1px solid #5f5d54;border-bottom:1px solid #fff;"></div>
<div class="t" style="left:771.5px;top:72px;font-size:10.5px;line-height:12.5px;letter-spacing:-0.2px;">位置<span class="l">/</span>总数</div>
<div class="" style="left:821px;top:69px;width:16px;height:17px;background:#ECE9D8;border:1px solid #5f5d54;box-shadow:inset 1px 1px 0 #fff,inset -1px -1px 0 #aaa79a;"></div>
<svg class="i" style="left:824px;top:72.5px" width="10" height="10" viewBox="0 0 10 10"><path d="M2 0.6 V9.4 L7.8 5 Z" fill="#a5a293"/></svg>
<div class="" style="left:837px;top:69px;width:17px;height:17px;background:#ECE9D8;border:1px solid #5f5d54;box-shadow:inset 1px 1px 0 #fff,inset -1px -1px 0 #aaa79a;"></div>
<svg class="i" style="left:840px;top:72.5px" width="10" height="10" viewBox="0 0 10 10"><path d="M8.4 1 V9" stroke="#a5a293" stroke-width="1.5"/><path d="M1.4 0.6 V9.4 L7.2 5 Z" fill="#a5a293"/></svg>
<div class="" style="left:611px;top:88px;width:249px;height:1px;background:#7a96df;"></div>
<div class="t" style="left:609px;top:93px;width:79.5px;text-align:right;">试件批号</div>
<div class="edit" style="left:689px;top:91.8px;width:49.5px;height:15.3px;"></div>
<div class="t" style="left:730px;top:93px;width:76px;text-align:right;">钢号</div>
<div class="edit" style="left:806.5px;top:91.8px;width:50px;height:15.3px;"></div>
<div class="t" style="left:609px;top:112px;width:79.5px;text-align:right;">试验日期</div>
<div class="edit" style="left:689px;top:110.2px;width:49.5px;height:15.3px;"></div>
<div class="t" style="left:730px;top:112px;width:76px;text-align:right;">试验人</div>
<div class="edit" style="left:806.5px;top:110.2px;width:50px;height:15.3px;"></div>
<div class="t" style="left:609px;top:130px;width:79.5px;text-align:right;">试件形状</div>
<div class="edit" style="left:689px;top:128.6px;width:49.5px;height:15.3px;"></div>
<div class="t" style="left:730px;top:130px;width:76px;text-align:right;">尺寸<span class="l">(mm)</span></div>
<div class="edit" style="left:806.5px;top:128.6px;width:50px;height:15.3px;"></div>
<div class="raised" style="left:724px;top:131px;width:13px;height:12px;border-color:#fff #8a887c #8a887c #fff;"></div>
<svg class="i" style="left:727px;top:135px" width="7" height="4" viewBox="0 0 7 4"><path d="M0 0 H7 L3.5 4 Z" fill="#aaa79a"/></svg>
<div class="t" style="left:609px;top:149px;width:79.5px;text-align:right;"><span class="l">So(mm^</span><span class="d">2</span><span class="l">)</span></div>
<div class="edit" style="left:689px;top:147.0px;width:49.5px;height:15.3px;"></div>
<div class="t" style="left:730px;top:149px;width:76px;text-align:right;">标距倍率</div>
<div class="edit" style="left:806.5px;top:147.0px;width:50px;height:15.3px;"></div>
<div class="raised" style="left:842px;top:150px;width:13px;height:12px;border-color:#fff #8a887c #8a887c #fff;"></div>
<svg class="i" style="left:845px;top:154px" width="7" height="4" viewBox="0 0 7 4"><path d="M0 0 H7 L3.5 4 Z" fill="#aaa79a"/></svg>
<div class="t" style="left:609px;top:167px;width:79.5px;text-align:right;"><span class="l">Lo(mm)</span></div>
<div class="edit" style="left:689px;top:165.4px;width:49.5px;height:15.3px;"></div>
<div class="t" style="left:730px;top:167px;width:76px;text-align:right;">引伸计标距</div>
<div class="edit" style="left:806.5px;top:165.4px;width:50px;height:15.3px;"></div>
<div class="t" style="left:609px;top:185px;width:79.5px;text-align:right;"><span class="l">Lu(mm)</span></div>
<div class="edit" style="left:689px;top:183.8px;width:49.5px;height:15.3px;"></div>
<div class="t" style="left:730px;top:185px;width:76px;text-align:right;"><span class="l">A(%)</span></div>
<div class="edit" style="left:806.5px;top:183.8px;width:50px;height:15.3px;"></div>
<div class="t" style="left:609px;top:204px;width:79.5px;text-align:right;">断面尺寸</div>
<div class="edit" style="left:689px;top:202.1px;width:49.5px;height:15.3px;"></div>
<div class="t" style="left:730px;top:204px;width:76px;text-align:right;"><span class="l">Su(mm^</span><span class="d">2</span><span class="l">)</span></div>
<div class="edit" style="left:806.5px;top:202.1px;width:50px;height:15.3px;"></div>
<div class="t" style="left:609px;top:222px;width:79.5px;text-align:right;"><span class="l">Z(%)</span></div>
<div class="edit" style="left:689px;top:220.5px;width:49.5px;height:15.3px;"></div>
<div class="t" style="left:730px;top:222px;width:76px;text-align:right;"><span class="l">Fm(kN)</span></div>
<div class="edit" style="left:806.5px;top:220.5px;width:50px;height:15.3px;"></div>
<div class="t" style="left:609px;top:241px;width:79.5px;text-align:right;"><span class="l">Rm(MPa)</span></div>
<div class="edit" style="left:689px;top:238.9px;width:49.5px;height:15.3px;"></div>
<div class="t" style="left:730px;top:241px;width:76px;text-align:right;"><span class="l">FeH(kN)</span></div>
<div class="edit" style="left:806.5px;top:238.9px;width:50px;height:15.3px;"></div>
<div class="t" style="left:609px;top:259px;width:79.5px;text-align:right;"><span class="l">ReH(MPa)</span></div>
<div class="edit" style="left:689px;top:257.3px;width:49.5px;height:15.3px;"></div>
<div class="t" style="left:730px;top:259px;width:76px;text-align:right;"><span class="l">FeL(kN)</span></div>
<div class="edit" style="left:806.5px;top:257.3px;width:50px;height:15.3px;"></div>
<div class="t" style="left:609px;top:277px;width:79.5px;text-align:right;"><span class="l">ReL(MPa)</span></div>
<div class="edit" style="left:689px;top:275.7px;width:49.5px;height:15.3px;"></div>
<div class="t" style="left:730px;top:277px;width:76px;text-align:right;"><span class="l">Fp(kN)</span></div>
<div class="edit" style="left:806.5px;top:275.7px;width:50px;height:15.3px;"></div>
<div class="t" style="left:609px;top:296px;width:79.5px;text-align:right;"><span class="l">Rp(MPa)</span></div>
<div class="edit" style="left:689px;top:294.1px;width:49.5px;height:15.3px;"></div>
<div class="t" style="left:730px;top:296px;width:76px;text-align:right;"><span class="l">Ft(kN)</span></div>
<div class="edit" style="left:806.5px;top:294.1px;width:50px;height:15.3px;"></div>
<div class="t" style="left:609px;top:314px;width:79.5px;text-align:right;"><span class="l">Rt(MPa)</span></div>
<div class="edit" style="left:689px;top:312.5px;width:49.5px;height:15.3px;"></div>
<div class="t" style="left:730px;top:314px;width:76px;text-align:right;"><span class="l">E(GPa)</span></div>
<div class="edit" style="left:806.5px;top:312.5px;width:50px;height:15.3px;"></div>
<div class="t" style="left:609px;top:333px;width:79.5px;text-align:right;">屈强比</div>
<div class="edit" style="left:689px;top:330.9px;width:49.5px;height:15.3px;"></div>
<div class="t" style="left:730px;top:333px;width:76px;text-align:right;">强屈比</div>
<div class="edit" style="left:806.5px;top:330.9px;width:50px;height:15.3px;"></div>
<!-- taskbar -->
<div class="" style="left:0px;top:616px;width:860px;height:29px;background:linear-gradient(to bottom,#3A7BE8 0px,#4F95F5 2px,#2C68E0 5px,#245EDC 9px,#2560DE 22px,#1F50C4 27px,#1941A5 29px);"></div>
<div class="" style="left:0px;top:620px;width:81px;height:23px;border-radius:0 8px 8px 0 / 0 11px 11px 0;background:linear-gradient(to bottom,#6DB869 0px,#44A044 3px,#3A9E3A 12px,#349434 18px,#2A7A2A 23px);box-shadow:inset -2px 0 3px rgba(0,60,0,.45),inset 0 1px 1px rgba(255,255,255,.35);"></div>
<svg class="i" style="left:9px;top:623px" width="17" height="16" viewBox="0 0 17 16">
<path d="M1.6 2.6 C3.4 1.4 5.6 1.4 7.4 2.6 L6.4 7.4 C4.8 6.4 2.8 6.4 0.8 7.4 Z" fill="#E8502A"/>
<path d="M8.6 3 C10.4 4 12.6 4 14.6 2.8 L13.6 7.6 C11.8 8.6 9.6 8.6 7.6 7.8 Z" fill="#7CC142"/>
<path d="M0.6 8.6 C2.4 7.6 4.6 7.6 6.2 8.6 L5.2 13.4 C3.6 12.4 1.4 12.4 -0.4 13.4 Z" fill="#3C7CE0"/>
<path d="M7.4 9 C9.2 10 11.4 10 13.4 8.8 L12.4 13.6 C10.6 14.6 8.4 14.6 6.4 13.8 Z" fill="#F4C222"/></svg>
<div class="t" style="left:30px;top:623.5px;color:#fff;font-size:17px;line-height:19px;font-weight:300;transform:skewX(-14deg);text-shadow:1px 1px 1px rgba(0,40,0,.6);letter-spacing:0px;line-height:18px;">开始</div>
<div class="" style="left:89.5px;top:625px;width:2px;height:2px;background:#1436a0;"></div>
<div class="" style="left:91.5px;top:625.5px;width:1px;height:1px;background:rgba(90,170,250,.55);"></div>
<div class="" style="left:91.5px;top:627px;width:2px;height:2px;background:#1436a0;"></div>
<div class="" style="left:90.5px;top:627.5px;width:1px;height:1px;background:rgba(90,170,250,.55);"></div>
<div class="" style="left:89.5px;top:629px;width:2px;height:2px;background:#1436a0;"></div>
<div class="" style="left:91.5px;top:629.5px;width:1px;height:1px;background:rgba(90,170,250,.55);"></div>
<div class="" style="left:91.5px;top:631px;width:2px;height:2px;background:#1436a0;"></div>
<div class="" style="left:90.5px;top:631.5px;width:1px;height:1px;background:rgba(90,170,250,.55);"></div>
<div class="" style="left:89.5px;top:633px;width:2px;height:2px;background:#1436a0;"></div>
<div class="" style="left:91.5px;top:633.5px;width:1px;height:1px;background:rgba(90,170,250,.55);"></div>
<div class="" style="left:91.5px;top:635px;width:2px;height:2px;background:#1436a0;"></div>
<div class="" style="left:90.5px;top:635.5px;width:1px;height:1px;background:rgba(90,170,250,.55);"></div>
<div class="" style="left:89.5px;top:637px;width:2px;height:2px;background:#1436a0;"></div>
<div class="" style="left:91.5px;top:637.5px;width:1px;height:1px;background:rgba(90,170,250,.55);"></div>
<div class="" style="left:91.5px;top:639px;width:2px;height:2px;background:#1436a0;"></div>
<div class="" style="left:90.5px;top:639.5px;width:1px;height:1px;background:rgba(90,170,250,.55);"></div>
<svg class="i" style="left:99.5px;top:625px" width="14" height="14" viewBox="0 0 14 14"><circle cx="7" cy="7" r="6.4" fill="#e8ecf4" stroke="#8a96b4" stroke-width="0.8"/>
<path d="M7 0.8 A6.2 6.2 0 0 1 13.2 7 L7 7 Z" fill="#F08030"/><path d="M13.2 7 A6.2 6.2 0 0 1 7 13.2 L7 7 Z" fill="#58B048"/>
<circle cx="7" cy="7" r="4.2" fill="#fff"/><circle cx="7" cy="7" r="3.6" fill="#2858D8"/><path d="M5.8 4.8 L9.4 7 L5.8 9.2 Z" fill="#fff"/></svg>
<svg class="i" style="left:119px;top:624.5px" width="14" height="15" viewBox="0 0 14 15"><ellipse cx="7" cy="4.2" rx="3.4" ry="3.8" fill="#111"/><ellipse cx="7" cy="9" rx="4.6" ry="4.2" fill="#111"/>
<ellipse cx="7" cy="9.6" rx="2.8" ry="3" fill="#fff"/><path d="M3 7 Q7 9.4 11 7 L10.6 8.6 Q7 10.6 3.4 8.6 Z" fill="#E82020"/>
<ellipse cx="5.8" cy="3.6" rx="0.8" ry="1.1" fill="#fff"/><ellipse cx="8.2" cy="3.6" rx="0.8" ry="1.1" fill="#fff"/>
<path d="M5.4 5.6 Q7 6.8 8.6 5.6 Q7 5 5.4 5.6 Z" fill="#F0A000"/>
<path d="M0.6 13 Q7 10.6 13.4 13 L13.4 14.6 H0.6 Z" fill="#E8A020"/><path d="M1.2 14.2 Q7 12 12.8 14.2" stroke="#58A0F0" stroke-width="1.2" fill="none"/></svg>
<svg class="i" style="left:137.5px;top:624.5px" width="15" height="15" viewBox="0 0 15 15"><circle cx="7.4" cy="8.2" r="4.6" fill="none" stroke="#58B0F8" stroke-width="3"/>
<path d="M3 8.2 H12" stroke="#58B0F8" stroke-width="2.2"/><path d="M9.2 10.9 H13.4" stroke="#245EDC" stroke-width="2.6"/>
<path d="M1 12.6 C-0.6 8 6 1.6 13.8 1.2 C11 3.4 10 4 9 5" fill="none" stroke="#9CCCF8" stroke-width="1.1"/></svg>
<div class="t" style="left:161.5px;top:620.5px;color:#d8e6ff;font-size:12px;line-height:14px;font-family:'Liberation Sans',sans-serif;">»</div>
<div class="" style="left:175px;top:625px;width:2px;height:2px;background:#1436a0;"></div>
<div class="" style="left:177px;top:625.5px;width:1px;height:1px;background:rgba(90,170,250,.55);"></div>
<div class="" style="left:177px;top:627px;width:2px;height:2px;background:#1436a0;"></div>
<div class="" style="left:176px;top:627.5px;width:1px;height:1px;background:rgba(90,170,250,.55);"></div>
<div class="" style="left:175px;top:629px;width:2px;height:2px;background:#1436a0;"></div>
<div class="" style="left:177px;top:629.5px;width:1px;height:1px;background:rgba(90,170,250,.55);"></div>
<div class="" style="left:177px;top:631px;width:2px;height:2px;background:#1436a0;"></div>
<div class="" style="left:176px;top:631.5px;width:1px;height:1px;background:rgba(90,170,250,.55);"></div>
<div class="" style="left:175px;top:633px;width:2px;height:2px;background:#1436a0;"></div>
<div class="" style="left:177px;top:633.5px;width:1px;height:1px;background:rgba(90,170,250,.55);"></div>
<div class="" style="left:177px;top:635px;width:2px;height:2px;background:#1436a0;"></div>
<div class="" style="left:176px;top:635.5px;width:1px;height:1px;background:rgba(90,170,250,.55);"></div>
<div class="" style="left:175px;top:637px;width:2px;height:2px;background:#1436a0;"></div>
<div class="" style="left:177px;top:637.5px;width:1px;height:1px;background:rgba(90,170,250,.55);"></div>
<div class="" style="left:177px;top:639px;width:2px;height:2px;background:#1436a0;"></div>
<div class="" style="left:176px;top:639.5px;width:1px;height:1px;background:rgba(90,170,250,.55);"></div>
<div class="" style="left:184px;top:621px;width:133px;height:21px;border-radius:3px;background:linear-gradient(to bottom,#5494F4 0px,#3E82EC 3px,#3A7CE8 16px,#3270DC 21px);box-shadow:inset 1px 1px 0 rgba(255,255,255,.25),inset -1px -1px 0 rgba(0,20,90,.35);"></div>
<svg class="i" style="left:191px;top:625px" width="14" height="12" viewBox="0 0 14 12"><path d="M0.6 11.4 V1.6 H5 L6.4 3.2 H13.2 V11.4 Z" fill="#F4D26A" stroke="#a07a12" stroke-width="0.8"/><path d="M0.6 4.6 H13.2" stroke="#fdeea8" stroke-width="1"/></svg>
<div class="t" style="left:207px;top:627px;color:#fff;">微机控制</div>
<div class="" style="left:319px;top:621px;width:132px;height:21px;border-radius:3px;background:linear-gradient(to bottom,#5494F4 0px,#3E82EC 3px,#3A7CE8 16px,#3270DC 21px);box-shadow:inset 1px 1px 0 rgba(255,255,255,.25),inset -1px -1px 0 rgba(0,20,90,.35);"></div>
<svg class="i" style="left:326px;top:624px" width="14" height="14" viewBox="0 0 14 14"><path d="M3.4 0.6 H13.4 V13.4 H3.4 Z" fill="#fff" stroke="#555" stroke-width="0.8"/>
<path d="M9 3 h3.4 M9 5 h3.4 M9 7 h3.4 M5 11 h7.4" stroke="#999" stroke-width="0.7"/>
<rect x="0.4" y="2.4" width="8.4" height="8" fill="#2038A8" stroke="#fff" stroke-width="0.6"/>
<path d="M1.8 4.2 L3 8.8 L4.6 5.4 L6.2 8.8 L7.4 4.2" fill="none" stroke="#fff" stroke-width="1"/></svg>
<div class="t" style="left:342px;top:627px;color:#fff;"><span class="d">1</span><span class="l">DW-</span><span class="d">50</span><span class="l">A - Micros...</span></div>
<div class="" style="left:454px;top:621px;width:131px;height:21px;border-radius:3px;background:linear-gradient(to bottom,#5494F4 0px,#3E82EC 3px,#3A7CE8 16px,#3270DC 21px);box-shadow:inset 1px 1px 0 rgba(255,255,255,.25),inset -1px -1px 0 rgba(0,20,90,.35);"></div>
<svg class="i" style="left:461px;top:624px" width="14" height="14" viewBox="0 0 14 14"><path d="M1.4 7 A5.6 5.6 0 0 1 12.6 7 Z" fill="#E6F4EE" stroke="#444" stroke-width="0.9"/>
<path d="M1 7 h4.6 v5 l-2.4 1.4 l-2.2 -2 z" fill="#E8895A" stroke="#7a3b1c" stroke-width="0.6"/>
<rect x="6.4" y="6" width="6" height="5" fill="#dcdcdc" stroke="#444" stroke-width="0.7"/><rect x="7.4" y="7" width="4" height="2.8" fill="#1030E0"/>
<path d="M5.6 12 h7.8 v1.6 h-7.8 z" fill="#cfcfcf" stroke="#444" stroke-width="0.6"/></svg>
<div class="" style="left:647px;top:625px;width:2px;height:2px;background:#1436a0;"></div>
<div class="" style="left:649px;top:625.5px;width:1px;height:1px;background:rgba(90,170,250,.55);"></div>
<div class="" style="left:649px;top:627px;width:2px;height:2px;background:#1436a0;"></div>
<div class="" style="left:648px;top:627.5px;width:1px;height:1px;background:rgba(90,170,250,.55);"></div>
<div class="" style="left:647px;top:629px;width:2px;height:2px;background:#1436a0;"></div>
<div class="" style="left:649px;top:629.5px;width:1px;height:1px;background:rgba(90,170,250,.55);"></div>
<div class="" style="left:649px;top:631px;width:2px;height:2px;background:#1436a0;"></div>
<div class="" style="left:648px;top:631.5px;width:1px;height:1px;background:rgba(90,170,250,.55);"></div>
<div class="" style="left:647px;top:633px;width:2px;height:2px;background:#1436a0;"></div>
<div class="" style="left:649px;top:633.5px;width:1px;height:1px;background:rgba(90,170,250,.55);"></div>
<div class="" style="left:649px;top:635px;width:2px;height:2px;background:#1436a0;"></div>
<div class="" style="left:648px;top:635.5px;width:1px;height:1px;background:rgba(90,170,250,.55);"></div>
<div class="" style="left:647px;top:637px;width:2px;height:2px;background:#1436a0;"></div>
<div class="" style="left:649px;top:637.5px;width:1px;height:1px;background:rgba(90,170,250,.55);"></div>
<div class="" style="left:649px;top:639px;width:2px;height:2px;background:#1436a0;"></div>
<div class="" style="left:648px;top:639.5px;width:1px;height:1px;background:rgba(90,170,250,.55);"></div>
<svg class="i" style="left:659px;top:627px" width="14" height="10" viewBox="0 0 14 10"><rect x="0.6" y="2.6" width="12.8" height="6.8" rx="1" fill="#f4f4f4" stroke="#222" stroke-width="1"/>
<path d="M2.4 4.6 h9.2 M2.4 6.4 h9.2 M4 8 h6" stroke="#222" stroke-width="0.9" stroke-dasharray="1 0.8"/><path d="M4 2.4 C4 0.8 7 1.4 9.6 0.6" fill="none" stroke="#222" stroke-width="0.8"/></svg>
<svg class="i" style="left:679px;top:625px" width="11" height="13" viewBox="0 0 11 13"><path d="M0.6 0.6 H10.4 V9.8 H6.4 L5.4 12.2 L4.4 9.8 H0.6 Z" fill="#FFF6A0" stroke="#222" stroke-width="1"/>
<text x="5.5" y="8.6" font-family="Liberation Sans, sans-serif" font-size="9" font-weight="bold" fill="#1020b0" text-anchor="middle">?</text></svg>
<svg class="i" style="left:699px;top:625px" width="8" height="6" viewBox="0 0 8 6"><rect x="2.4" y="0.5" width="5" height="3.4" fill="none" stroke="#cfe0ff" stroke-width="0.9"/><rect x="0.5" y="2.2" width="5" height="3.4" fill="#2a62dc" stroke="#cfe0ff" stroke-width="0.9"/></svg>
<svg class="i" style="left:700px;top:636px" width="5" height="3" viewBox="0 0 5 3"><path d="M0 0 H5 L2.5 3 Z" fill="#cfe0ff"/></svg>
<div class="" style="left:720px;top:616px;width:140px;height:29px;background:linear-gradient(to bottom,#2A6CE0 0px,#3A86EE 2px,#2C7CE6 4px,#18A8F4 5.5px,#149CEE 10px,#1292E8 22px,#0F7ACC 27px,#0c62ac 29px);border-left:1px solid #0a3fa0;box-shadow:inset 1px 0 0 #4cb4f8;"></div>
<svg class="i" style="left:729px;top:625.5px" width="14" height="14" viewBox="0 0 14 14"><rect x="4.6" y="0.6" width="7" height="6" fill="#8e9ccc" stroke="#333" stroke-width="0.8"/><rect x="0.6" y="4" width="7" height="6" fill="#aab8e0" stroke="#333" stroke-width="0.8"/>
<rect x="1.6" y="5" width="5" height="3.6" fill="#3a52b8"/><path d="M1 11.6 h6" stroke="#ccc" stroke-width="1.4"/>
<path d="M7 7.4 L13 13.4 M13 7.4 L7 13.4" stroke="#E81818" stroke-width="1.8"/></svg>
<svg class="i" style="left:745px;top:625.5px" width="12" height="14" viewBox="0 0 12 14"><path d="M2 1.2 L6.6 1 L5.6 2.4 L8.8 5.4 L6.8 7 L4 3.8 L2.6 5 Z" fill="#28B428" stroke="#0a5a0a" stroke-width="0.6"/>
<path d="M1 9.4 L8.6 6.4 L11.4 9 L3.8 12.6 Z" fill="#c8c8c8" stroke="#333" stroke-width="0.8"/><path d="M3.4 9.6 L8 7.8" stroke="#555" stroke-width="0.8"/></svg>
<svg class="i" style="left:760px;top:625.5px" width="13" height="14" viewBox="0 0 13 14"><rect x="1.6" y="0.6" width="9.4" height="7" fill="#F4E04A" stroke="#666" stroke-width="0.8"/><rect x="3" y="2" width="6.6" height="4.2" fill="#FFF27a"/>
<rect x="0.6" y="8.6" width="11.8" height="4.8" fill="#c8ccd8" stroke="#666" stroke-width="0.7"/><rect x="1.6" y="9.6" width="3.4" height="2.6" fill="#E84030"/><rect x="7" y="9.6" width="4" height="2.6" fill="#8894b8"/></svg>
<svg class="i" style="left:774px;top:625.5px" width="14" height="14" viewBox="0 0 14 14"><rect x="0.4" y="0.4" width="13.2" height="13.2" fill="#dfe9fb"/>
<g fill="none" stroke="#3a74d8" stroke-width="0.9"><path d="M0.4 3.6 H13.6 M0.4 7 H13.6 M0.4 10.4 H13.6"/><path d="M3.6 0.4 V3.6 M8.6 0.4 V3.6 M1.6 3.6 V7 M6.4 3.6 V7 M11.2 3.6 V7 M3.6 7 V10.4 M8.6 7 V10.4 M1.6 10.4 V13.6 M6.4 10.4 V13.6 M11.2 10.4 V13.6"/></g></svg>
<svg class="i" style="left:790px;top:625.5px" width="13" height="14" viewBox="0 0 13 14"><rect x="0" y="0" width="13" height="14" fill="#0a1470"/>
<circle cx="6.5" cy="7" r="1.6" fill="#FFE820"/><path d="M4 4 A4 4 0 0 0 4 10 M9 4 A4 4 0 0 1 9 10 M2.2 2.4 A6.4 6.4 0 0 0 2.2 11.6 M10.8 2.4 A6.4 6.4 0 0 1 10.8 11.6" fill="none" stroke="#FFE820" stroke-width="1"/></svg>
<svg class="i" style="left:804px;top:625.5px" width="14" height="14" viewBox="0 0 14 14"><circle cx="5.6" cy="5.6" r="4.8" fill="#8a8a8a" stroke="#444" stroke-width="0.8"/><circle cx="4.8" cy="5" r="2.6" fill="#555"/><circle cx="4.2" cy="4.2" r="1" fill="#c8c8c8"/>
<path d="M8 13 L12.8 7.4" stroke="#7ab0f0" stroke-width="1.4"/><path d="M10.4 13.4 L13.6 9.6" stroke="#7ab0f0" stroke-width="1"/></svg>
<div class="t" style="left:825.5px;top:624.5px;color:#fff;font-size:12px;line-height:14px;font-family:'Liberation Serif',serif;letter-spacing:0px;">8:41</div>
</div>
</body></html>
